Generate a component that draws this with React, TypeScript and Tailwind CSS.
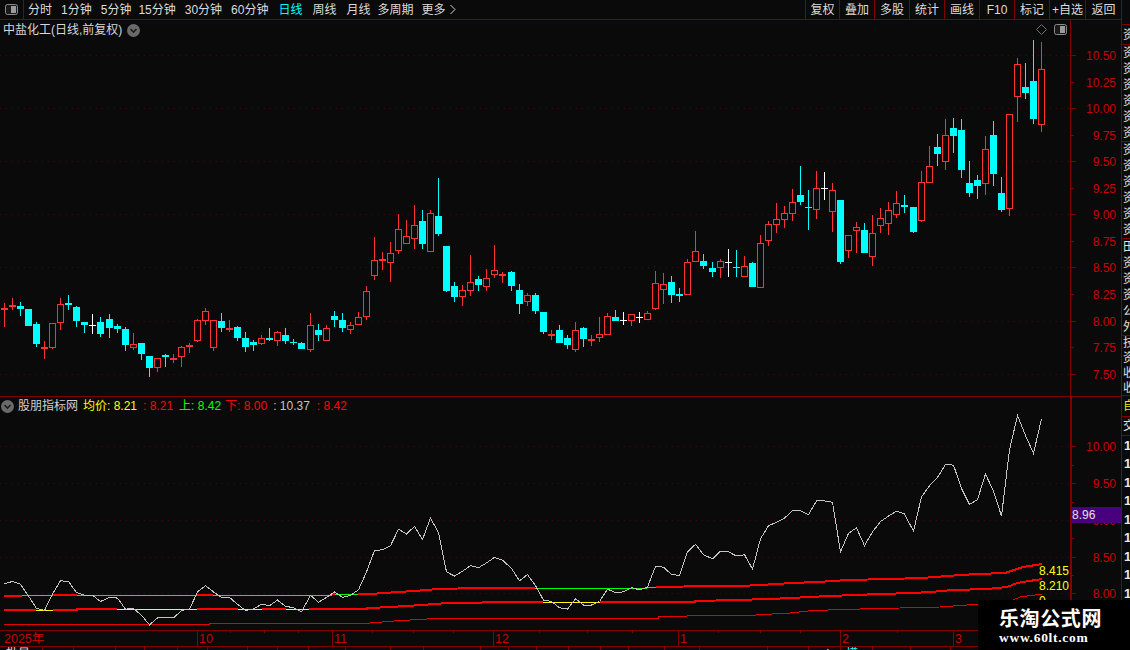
import React from "react";

type K = "c" | "r" | "w";
type Row = [K, number, number, number, number];

const z3: Row[] = [
  ["r",85,89,70,140],["r",75,79,55,90],["c",78,87,65,107],["c",87,137,87,137],["c",132,191,125,200],["r",202,208,183,237],["r",130,204,130,206],["r",73,130,55,150],["c",69,75,45,90],["c",81,123,78,140],
  ["c",126,134,126,158],["w",134,134,102,163],["c",126,162,112,170],["c",117,144,102,174],["c",138,147,132,158],["c",147,194,141,212],["r",193,203,160,209],["c",189,221,189,240],["c",228,263,228,291],["r",235,263,235,276],
  ["c",226,231,222,261],["r",233,239,222,249],["r",202,230,198,261],["r",196,202,189,218],["r",121,183,118,185],["r",94,124,85,134],["r",121,203,121,213],["c",123,143,100,156],["r",145,151,121,155],["c",141,173,138,184],
  ["c",174,201,156,217],["c",186,194,181,213],["r",175,193,166,194],["c",174,179,144,184],["r",157,184,153,197],["c",165,182,144,191],["c",186,190,178,196],["c",189,207,186,208],["r",136,209,99,215],["c",150,164,132,183],
  ["r",145,182,136,182],["c",108,120,94,140],["c",120,144,100,156],["r",136,151,127,162],["r",112,136,96,136],["r",34,112,18,120],
];
const z4: Row[] = [
  ["r",271,317,201,330],["r",267,271,246,300],["r",250,278,216,335],["r",178,242,132,252],["r",199,221,150,221],["r",166,206,105,237],["c",153,222,120,238],["r",130,245,120,245],["c",138,192,24,198],["c",228,363,228,366],
  ["c",348,381,336,396],["r",361,380,345,408],["r",337,362,255,378],["c",327,345,318,362],["r",325,350,297,363],["r",301,314,225,324],["r",313,319,306,339],["c",306,348,303,363],["c",360,402,342,432],["r",376,395,369,408],
  ["c",375,423,369,432],["c",426,486,426,492],["r",493,496,480,510],["c",480,519,465,519],["c",504,525,495,537],["r",481,539,456,546],["c",474,507,471,531],["r",508,514,495,528],["r",493,503,441,516],["r",439,494,429,494],
  ["c",441,453,420,453],["w",451,451,426,465],["r",433,452,433,468],["w",441,441,426,459],["r",430,449,423,449],["r",340,416,303,420],["r",343,359,309,402],["c",336,375,318,399],["c",372,378,354,396],["r",277,374,267,374],
  ["r",244,275,183,275],["c",273,288,252,297],["c",294,306,276,321],["r",274,293,267,324],["w",276,276,237,321],["c",291,293,240,321],
];
const z5: Row[] = [
  ["r",469,500,438,500],["c",459,531,456,531],["r",400,534,375,534],["r",343,392,333,408],["r",328,344,279,369],["r",310,329,288,354],["r",277,311,237,333],["c",255,276,168,285],["c",291,293,240,360],["r",235,299,183,327],
  ["w",235,235,186,270],["r",241,305,219,366],["c",270,456,270,462],["r",376,422,376,444],["r",352,362,336,429],["c",360,429,339,429],["r",370,440,315,468],["r",325,347,294,369],["r",301,341,276,375],["r",280,314,243,324],
  ["c",285,291,255,309],["c",291,366,291,369],["r",217,332,183,336],["r",169,218,108,218],["c",111,132,72,168],["r",76,155,27,180],["c",54,78,24,129],["c",60,180,27,204],["c",219,249,153,261],["c",210,228,195,267],
  ["r",118,221,78,255],["c",75,192,33,228],["c",249,300,201,306],["r",13,296,13,318],
];
const z2: Row[] = [["r",193,292,174,366],["c",261,278,189,297],["c",243,356,120,372],["r",208,376,126,395]];

const conv = (rows: Row[], base: number): Row[] =>
  rows.map(([k, a, b, c, d]) => [k, Math.round(base + a / 3), Math.round(base + b / 3), Math.round(base + c / 3), Math.round(base + d / 3)] as Row);

const candles: Row[] = [...conv(z3, 280), ...conv(z4, 170), ...conv(z5, 110), ...conv(z2, 0)];
const cx = (i: number) => Math.round(4 + 8.04 * i);
const closeY = ([k, a, b]: Row) => (k === "c" ? b : a);
const toLower = (y: number) => 446 + (y - 108.3) * 0.689;
const closeLine = candles.map((c, i) => `${cx(i) + 0.5},${toLower(closeY(c)).toFixed(1)}`).join(" ");

const RED = "#ff3232";
const CYAN = "#00ffff";

function Candle({ r, i }: { r: Row; i: number }) {
  const [k, top, bot, hi, lo] = r;
  const x = cx(i);
  if (k === "w") {
    return (
      <g fill="#ffffff">
        <rect x={x} y={hi} width={1} height={lo - hi} />
        <rect x={x - 3} y={top} width={7} height={1} />
      </g>
    );
  }
  if (k === "c") {
    return (
      <g fill={CYAN}>
        <rect x={x} y={hi} width={1} height={lo - hi} />
        <rect x={x - 3} y={top} width={7} height={Math.max(bot - top, 1)} />
      </g>
    );
  }
  return (
    <g>
      <rect x={x} y={hi} width={1} height={Math.max(top - hi, 0)} fill={RED} />
      <rect x={x} y={bot} width={1} height={Math.max(lo - bot, 0)} fill={RED} />
      <rect x={x - 2.5} y={top + 0.5} width={6} height={Math.max(bot - top - 1, 0.5)} fill="#0a0a0a" stroke={RED} strokeWidth={1} />
    </g>
  );
}

const P = (pts: number[][]) => pts.map((p) => p.join(",")).join(" ");

const thick: number[][][] = [
  [[4,596],[22,596]],[[53,595],[77,595]],[[197,595],[213,595]],[[332,594],[335,594]],
  [[358,594],[370,594],[398,592],[414,591],[438,589],[478,588],[535,588]],
  [[656,587],[712,586],[740,586],[760,585],[777,584],[792,583],[817,582],[848,580],[888,579],[922,578],[947,576],[977,574],[1005,573],[1017,569],[1023,567],[1042,564]],
  [[4,610],[36,610]],[[53,610],[77,610],[77,609],[117,609]],[[197,609],[238,609]],[[262,609],[286,609]],
  [[309,609],[367,609],[367,608],[370,608],[390,607],[407,606],[422,605],[447,603],[518,602],[543,602]],
  [[600,602],[695,602],[695,601],[737,600],[768,599],[792,598],[808,597],[830,596],[880,594],[913,593],[930,592],[953,590],[987,589],[1007,587],[1017,583],[1023,582],[1042,579]],
];
const green: number[][][] = [[[22,595],[53,595]],[[77,595],[197,595]],[[213,595],[332,595]],[[335,594],[358,594]],[[535,588],[647,588],[656,587]]];
const yellow: number[][][] = [[[36,610],[53,610]],[[117,609],[197,609]],[[238,609],[262,609]],[[286,609],[309,609]],[[543,602],[600,602]]];
const thin = [[4,624],[209,624],[209,623],[370,623],[394,621],[410,620],[427,619],[434,618],[466,618],[658,618],[658,617],[717,615],[740,616],[772,614],[790,613],[808,611],[828,610],[860,609],[900,608],[940,607],[967,605],[993,603],[1013,600],[1020,597],[1042,594]];

const upperGrid = [55, 108, 161, 214, 267, 321, 374];
const lowerGrid = [446, 483, 520, 557, 593];
const upperLabels: [string, number][] = [["10.50",55],["10.25",82],["10.00",108],["9.75",135],["9.50",161],["9.25",188],["9.00",214],["8.75",241],["8.50",267],["8.25",294],["8.00",321],["7.75",347],["7.50",374]];
const lowerLabels: [string, number][] = [["10.00",446],["9.50",483],["9.00",520],["8.50",557],["8.00",593]];
const lowerMinor = [465, 502, 538, 575, 612];
const months: [string, number][] = [["2025年",0],["10",197],["11",332],["12",493],["1",678],["2",840],["3",953]];
const dateTicks = [230,264,298,372,413,453,539,587,632,718,760,800,897];
const bottomSeps = [42,73,115,144,177,207,247,277,308,345,390,423,480,508,536,568,600,628,664,699,767,808,840,872,910,950];

const font = "[font-family:'Liberation_Sans','Noto_Sans_CJK_SC',sans-serif]";

const leftTabs: [string, string, string][] = [
  ["分时", "ml-[4px]", "text-[#dcdcdc]"],
  ["1分钟", "ml-[9px]", "text-[#dcdcdc]"],
  ["5分钟", "ml-[9px]", "text-[#dcdcdc]"],
  ["15分钟", "ml-[7px]", "text-[#dcdcdc]"],
  ["30分钟", "ml-[9px]", "text-[#dcdcdc]"],
  ["60分钟", "ml-[9px]", "text-[#dcdcdc]"],
  ["日线", "ml-[10px]", "text-[#00ffff]"],
  ["周线", "ml-[10px]", "text-[#dcdcdc]"],
  ["月线", "ml-[10px]", "text-[#dcdcdc]"],
  ["多周期", "ml-[7px]", "text-[#dcdcdc]"],
  ["更多", "ml-[8px]", "text-[#dcdcdc]"],
];
const rightTabs: [string, string][] = [
  ["复权","w-[34px]"],["叠加","w-[35px]"],["多股","w-[35px]"],["统计","w-[35px]"],["画线","w-[35px]"],["F10","w-[35px]"],["标记","w-[35px]"],["+自选","w-[36px]"],["返回","w-[36px]"],
];

function PanelIcon() {
  return (
    <svg width="13" height="11" viewBox="0 0 13 11">
      <rect x="0.5" y="0.5" width="12" height="10" rx="2" fill="#1a1a1a" stroke="#8a8a8a" />
      <rect x="6" y="2" width="5" height="7" fill="#9a9a9a" />
    </svg>
  );
}

function RoundChevron({ size = 13 }: { size?: number }) {
  return (
    <svg width={size} height={size} viewBox="0 0 13 13">
      <circle cx="6.5" cy="6.5" r="6.5" fill="#6a6a6a" />
      <path d="M3.5 5 L6.5 8 L9.5 5" fill="none" stroke="#1c1c1c" strokeWidth="1.6" />
    </svg>
  );
}

const sideChars = ["资","资","资","资","资","资"];

function SideSection({ chars, tall }: { chars: string[]; tall: string }) {
  return (
    <div className={`${tall} flex flex-col border-b border-[#800000] overflow-hidden pl-[1px]`}>
      {chars.map((c, i) => (
        <div key={i} className="flex-1 flex items-center text-[12px] leading-none text-[#e0e0e0] whitespace-nowrap">{c}</div>
      ))}
    </div>
  );
}

export default function App() {
  return (
    <div className={`relative w-[1130px] h-[650px] overflow-hidden flex bg-[#0a0a0a] ${font}`}>
      <div className="w-[1121px] h-full flex flex-col">
        {/* top bar */}
        <div className="h-[20px] shrink-0 flex items-center border-b border-[#800000] text-[12px]">
          <div className="w-[24px] h-full flex items-center justify-center border-r border-[#800000]">
            <PanelIcon />
          </div>
          <div className="flex items-center whitespace-nowrap">
            {leftTabs.map(([t, m, c]) => (
              <span key={t} className={`${m} ${c}`}>{t}</span>
            ))}
            <svg width="8" height="11" viewBox="0 0 8 11" className="ml-[3px]">
              <path d="M1.5 1 L6 5.5 L1.5 10" fill="none" stroke="#cfcfcf" strokeWidth="1" />
            </svg>
          </div>
          <div className="ml-auto flex h-full">
            {rightTabs.map(([t, w]) => (
              <div key={t} className={`${w} h-full flex items-center justify-center border-l border-[#800000] text-[#dcdcdc] whitespace-nowrap`}>{t}</div>
            ))}
          </div>
        </div>

        {/* upper chart */}
        <div className="h-[376px] shrink-0 flex">
          <div className="relative w-[1070px] h-full">
            <svg width="1070" height="376" viewBox="0 20 1070 376" className="block" shapeRendering="crispEdges">
              {upperGrid.map((y) => (
                <line key={y} x1="0" x2="1070" y1={y + 0.5} y2={y + 0.5} stroke="#560000" strokeDasharray="1 5" />
              ))}
              {candles.map((r, i) => (
                <Candle key={i} r={r} i={i} />
              ))}
            </svg>
            <div className="absolute left-[3px] top-[1px] flex items-center gap-[5px] text-[12px] text-[#d8d8d8] whitespace-nowrap">
              <span>中盐化工(日线,前复权)</span>
              <RoundChevron />
            </div>
            <div className="absolute right-[3px] top-[4px] flex items-center gap-[7px]">
              <svg width="11" height="11" viewBox="0 0 11 11">
                <path d="M5.5 0.5 L10.5 5.5 L5.5 10.5 L0.5 5.5 Z" fill="none" stroke="#6f6f6f" />
              </svg>
              <PanelIcon />
            </div>
          </div>
          <div className="w-[51px] h-full border-l border-[#800000]">
            <svg width="50" height="376" viewBox="1071 20 50 376" className="block">
              {upperLabels.map(([t, y], i) => (
                <g key={t}>
                  <rect x="1071" y={y} width={i % 2 === 0 ? 5 : 3} height="1" fill="#800000" />
                  <text x="1116" y={y + 5} textAnchor="end" fontSize="12" fill="#c80000" fontFamily="'Liberation Sans', sans-serif">{t}</text>
                </g>
              ))}
            </svg>
          </div>
        </div>

        {/* lower chart */}
        <div className="h-[234px] shrink-0 flex flex-col border-t border-[#800000]">
          <div className="flex-1 flex min-h-0">
            <div className="relative w-[1070px] h-full">
              <svg width="1070" height="233" viewBox="0 397 1070 233" className="block" shapeRendering="crispEdges">
                {lowerGrid.map((y) => (
                  <line key={y} x1="0" x2="1070" y1={y + 0.5} y2={y + 0.5} stroke="#560000" strokeDasharray="1 5" />
                ))}
                <polyline points={P(thin)} fill="none" stroke="#e60000" strokeWidth="1" />
                {thick.map((s, i) => (
                  <polyline key={i} points={P(s)} fill="none" stroke="#ff0000" strokeWidth="2" />
                ))}
                {green.map((s, i) => (
                  <polyline key={i} points={P(s)} fill="none" stroke="#00ff00" strokeWidth="1" />
                ))}
                {yellow.map((s, i) => (
                  <polyline key={i} points={P(s)} fill="none" stroke="#ffff00" strokeWidth="1" />
                ))}
                <polyline points={closeLine} fill="none" stroke="#c4c4c4" strokeWidth="1" />
              </svg>
              <div className="absolute left-[2px] top-0 flex items-center text-[12px] whitespace-nowrap">
                <span className="ml-[-1px]"><RoundChevron /></span>
                <span className="ml-[4px] text-[#d0d0d0]">股朋指标网</span>
                <span className="ml-[5px] text-[#ffff00]">均价: 8.21</span>
                <span className="ml-[6px] text-[#ff0000]">: 8.21</span>
                <span className="ml-[6px] text-[#00ff00]">上: 8.42</span>
                <span className="ml-[4px] text-[#ff0000]">下: 8.00</span>
                <span className="ml-[6px] text-[#c4c4c4]">: 10.37</span>
                <span className="ml-[7px] text-[#ff0000]">: 8.42</span>
              </div>
              <div className="absolute right-[1px] top-[167px] flex flex-col items-start text-[12px] leading-[15px] text-[#ffff00]">
                <span>8.415</span>
                <span>8.210</span>
                <span>0</span>
              </div>
            </div>
            <div className="relative w-[51px] h-full border-l-2 border-[#800000]">
              <svg width="49" height="233" viewBox="1072 397 49 233" className="block">
                {lowerLabels.map(([t, y]) => (
                  <g key={t}>
                    <rect x="1072" y={y} width="4" height="1" fill="#800000" />
                    <text x="1116" y={y + 5} textAnchor="end" fontSize="12" fill="#c80000" fontFamily="'Liberation Sans', sans-serif">{t}</text>
                  </g>
                ))}
                {lowerMinor.map((y) => (
                  <rect key={y} x="1072" y={y} width="2" height="1" fill="#800000" />
                ))}
              </svg>
              <div className="absolute left-0 top-[110px] w-[49px] h-[16px] flex items-center bg-[#48007f] text-[12px] text-[#e0e0e0]">8.96</div>
            </div>
          </div>
        </div>

        {/* date axis */}
        <div className="h-[16px] shrink-0 border-t border-[#800000]">
          <svg width="1121" height="15" viewBox="0 631 1121 15" className="block" shapeRendering="crispEdges">
            {dateTicks.map((x) => (
              <rect key={x} x={x} y="631" width="1" height="2" fill="#800000" />
            ))}
            {months.map(([t, x]) => (
              <g key={t}>
                {x > 0 && <rect x={x} y="631" width="1" height="15" fill="#800000" />}
                <text x={x > 0 ? x + 2 : 4} y="643" fontSize="12.5" fill="#c80000" shapeRendering="auto" fontFamily="'Liberation Sans','Noto Sans CJK SC',sans-serif">{t}</text>
              </g>
            ))}
          </svg>
        </div>

        {/* bottom strip */}
        <div className="h-[4px] shrink-0 border-t border-[#800000]">
          <svg width="1121" height="3" viewBox="0 647 1121 3" className="block">
            {bottomSeps.map((x) => (
              <rect key={x} x={x} y="647" width="1" height="3" fill="#800000" />
            ))}
            <text x="6" y="658" fontSize="12" fill="#e0e0e0" fontFamily="'Noto Sans CJK SC',sans-serif">批量</text>
            <text x="50" y="658" fontSize="12" fill="#e0e0e0" fontFamily="'Noto Sans CJK SC',sans-serif">;</text>
            <text x="826" y="658" fontSize="12" fill="#e0e0e0" fontFamily="'Noto Sans CJK SC',sans-serif">L</text>
            <text x="846" y="658" fontSize="12" fill="#00ffff" fontFamily="'Noto Sans CJK SC',sans-serif">模</text>
          </svg>
        </div>
      </div>

      {/* right clipped column */}
      <div className="w-[9px] h-full border-l border-[#800000] flex flex-col overflow-hidden">
        <div className="h-[25px] shrink-0 border-b border-[#800000]" />
        <SideSection chars={["资"]} tall="h-[20px]" />
        <SideSection chars={sideChars} tall="h-[97px]" />
        <SideSection chars={sideChars} tall="h-[97px]" />
        <SideSection chars={["田","资","资","资","公","外"]} tall="h-[97px]" />
        <SideSection chars={["技","资","收","收"]} tall="h-[60px]" />
        <div className="h-[21px] shrink-0 border-b border-[#800000] pl-[1px] flex items-center text-[12px] text-[#e8e800] whitespace-nowrap">自</div>
        <div className="h-[19px] shrink-0 border-b border-[#800000] pl-[1px] flex items-center text-[12px] text-[#e0e0e0] whitespace-nowrap">交</div>
        <div className="flex flex-col pl-[2px]">
          {Array.from({ length: 9 }).map((_, i) => (
            <div key={i} className="h-[18.5px] shrink-0 flex items-center text-[13px] leading-none font-bold text-[#e8e8e8]">1</div>
          ))}
        </div>
      </div>

      {/* watermark */}
      <div className="absolute right-0 bottom-0 w-[152px] h-[50px] bg-black flex flex-col items-start pl-[21px] pt-[6px]">
        <span className="text-[20px] leading-[24px] font-bold tracking-[0.6px] text-white [font-family:'Noto_Sans_CJK_SC',sans-serif]">乐淘公式网</span>
        <span className="mt-[1px] text-[13.5px] leading-[14px] font-bold tracking-[0.7px] text-white [font-family:'Liberation_Serif',serif]">www.60lt.com</span>
      </div>
    </div>
  );
}
